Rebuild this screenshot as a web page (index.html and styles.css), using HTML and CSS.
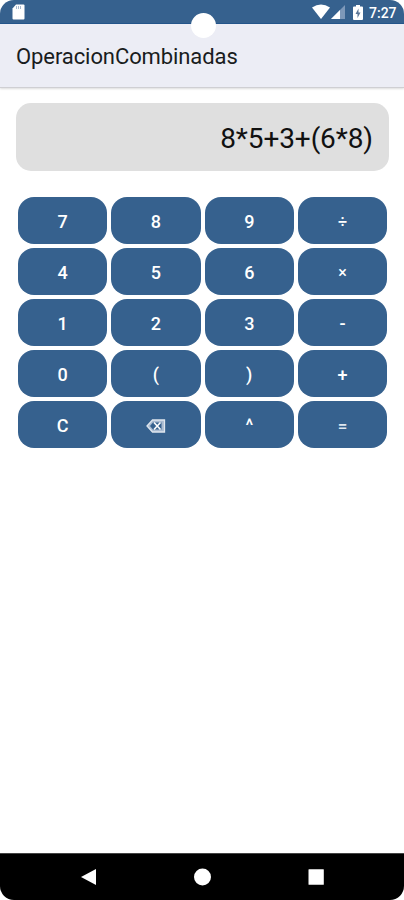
FILE: index.html
```html
<!DOCTYPE html>
<html lang="es">
<head>
<meta charset="utf-8">
<title>OperacionCombinadas</title>
<link rel="stylesheet" href="styles.css">
</head>
<body>
<div class="phone">
  <div class="status">
    <svg class="sd" width="13" height="16" viewBox="0 0 13 16"><path d="M4 .5h7.500q1 0 1 1V14.500q0 1-1 1h-10q-1 0-1-1V4.500z" fill="#fff"/><path d="M4.500 2v3M6.500 2v3M8.500 2v3" stroke="#a9b9cf"/></svg>
    <div class="indicators">
      <svg width="18" height="16" viewBox="0 0 18 16"><path d="M0 3.500Q9-2.500 18 3.500L9 15z" fill="#fff"/></svg>
      <svg class="signal" width="14" height="14" viewBox="0 0 14 14"><path d="M14 0v14H0z" fill="#7d98b9"/><path d="M9 5v9H0z" fill="#fff"/></svg>
      <svg class="battery" width="10" height="15" viewBox="0 0 10 15"><path d="M3 0h4v1.500h2q1 0 1 1V14q0 1-1 1H1q-1 0-1-1V2.500q0-1 1-1h2z" fill="#fff"/><path d="M5.500 3.500L2.500 9h2v4l3-5.500h-2z" fill="#5a7596"/></svg>
      <span class="time">7:27</span>
    </div>
    <i class="camera"></i>
  </div>
  <header class="appbar"><h1>OperacionCombinadas</h1></header>
  <main>
    <div class="display">8*5+3+(6*8)</div>
    <div class="keys">
      <button>7</button><button>8</button><button>9</button><button class="small">÷</button>
      <button>4</button><button>5</button><button>6</button><button class="small">×</button>
      <button>1</button><button>2</button><button>3</button><button>-</button>
      <button>0</button><button>(</button><button>)</button><button>+</button>
      <button>C</button>
      <button aria-label="Borrar"><svg width="20" height="14" viewBox="0 0 20 14" fill="none" stroke="#fff"><path d="M1 7L6.500 1H18.500V13H6.500z" fill="#a9bbd1" stroke="#dfe6ee" stroke-width="1.300"/><path d="M4 7L7 3.500H15.500V10.500H7z" fill="#36618e" stroke="none"/><path d="M8 3.500l6.500 7M14.500 3.500l-6.500 7" stroke-width="1.600"/></svg></button>
      <button>^</button><button class="equals">=</button>
    </div>
  </main>
  <nav class="navbar">
    <svg width="404" height="46" viewBox="0 0 404 46" fill="#fff"><path d="M81 23L96 15V31z"/><circle cx="202.500" cy="23" r="8.500"/><rect x="308.500" y="15.200" width="15.300" height="15.600" rx=".5"/></svg>
  </nav>
</div>
</body>
</html>
```
FILE: styles.css
```css
* { box-sizing: border-box; }
body { margin: 0; background: #fff; font-family: Roboto, sans-serif; }
.phone {
  width: 404px;
  height: 900px;
  display: flex;
  flex-direction: column;
  overflow: hidden;
  border-radius: 14px;
  background: #fff;
}
.status {
  position: relative;
  flex: none;
  height: 24px;
  display: flex;
  justify-content: space-between;
  padding: 4px 7px 0 12px;
  background: #36618e;
  border-bottom: 1px solid #24558a;
}
.indicators { display: flex; align-items: flex-start; color: #fff; }
.signal { margin: 1px 0 0 1px; }
.battery { margin: 1px 6px 0 8px; }
.time { font-size: 14px; line-height: 18px; font-weight: 500; width: 28px; white-space: nowrap; }
.camera {
  position: absolute;
  left: 190.500px;
  top: 12.500px;
  width: 25px;
  height: 25px;
  border-radius: 50%;
  background: #fff;
}
.appbar {
  flex: none;
  height: 64px;
  padding: 3px 16px 0;
  display: flex;
  align-items: center;
  background: #ecedf5;
  border-bottom: 1px solid #cfcfd3;
  box-shadow: 0 1px 2px rgba(0, 0, 0, .14);
}
h1 { margin: 0; font-size: 22px; line-height: 28px; font-weight: 400; letter-spacing: -.09px; color: #191c20; }
main { flex: 1; padding: 15px 15px 0 16px; }
.display {
  height: 68px;
  padding: 2px 16px 0;
  border-radius: 15px;
  background: #dfdfdf;
  color: #111;
  font-size: 28px;
  line-height: 68px;
  letter-spacing: -.1px;
  text-align: right;
}
.keys {
  display: grid;
  grid-template-columns: repeat(4, 89.300px);
  grid-auto-rows: 47px;
  gap: 4px;
  padding: 26px 0 0 2px;
}
button {
  display: flex;
  align-items: center;
  justify-content: center;
  padding: 2px 0 0;
  border: 0;
  border-radius: 16px;
  background: #36618e;
  color: #fff;
  font: 500 18px/24px Roboto, sans-serif;
}
.small { font-size: 16px; }
.equals { font-size: 17px; color: #dfe6ee; }
.navbar { flex: none; height: 47px; background: #000; border-top: 1px solid #444; }
.navbar svg { display: block; }
```
